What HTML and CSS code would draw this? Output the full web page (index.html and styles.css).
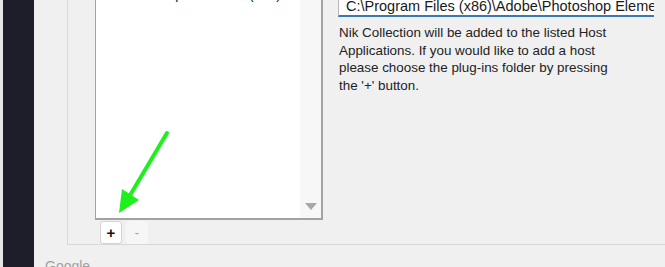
FILE: index.html
```html
<!DOCTYPE html>
<html>
<head>
<meta charset="utf-8">
<link rel="stylesheet" href="styles.css">
</head>
<body>
<div class="app">
  <div class="edge"></div>
  <div class="sidebar"></div>
  <div class="main">
    <div class="group">
      <div class="listcol">
        <div class="listbox">
          <div class="items">
            <div class="item">Photoshop Elements (x64)</div>
          </div>
          <div class="scrollbar">
            <div class="scroll-down"></div>
          </div>
        </div>
        <div class="buttons">
          <button class="btn add">+</button>
          <button class="btn remove">-</button>
        </div>
      </div>
      <div class="rightcol">
        <div class="pathbox">C:\Program Files (x86)\Adobe\Photoshop Elements 2020</div>
        <p class="desc">Nik Collection will be added to the listed Host<br>Applications. If you would like to add a host<br>please choose the plug-ins folder by pressing<br>the '+' button.</p>
      </div>
    </div>
    <div class="footer">Google</div>
  </div>
  <svg class="arrow" width="665" height="267" viewBox="0 0 665 267">
    <line x1="167" y1="133" x2="129" y2="197" stroke="#1ef01e" stroke-width="4" stroke-linecap="round"/>
    <polygon points="119,213 122,189 139,200" fill="#1ef01e"/>
  </svg>
</div>
</body>
</html>
```

FILE: styles.css
```css
html, body {
  margin: 0;
  padding: 0;
}
body {
  width: 665px;
  height: 267px;
  overflow: hidden;
  font-family: "Liberation Sans", Arial, sans-serif;
  background: #f0f0f0;
}
.app {
  position: relative;
  display: flex;
  width: 665px;
  height: 267px;
}
.edge {
  width: 3px;
  background: #e6e6e8;
}
.sidebar {
  width: 31px;
  background: #1e1e2b;
}
.main {
  flex: 1;
  display: flex;
  flex-direction: column;
  background: #f0f0f0;
}
.group {
  margin-left: 33px;
  border-left: 1px solid #d8d8d8;
  border-bottom: 1px solid #d8d8d8;
  display: flex;
  padding-left: 27px;
  box-sizing: border-box;
  height: 247px;
}
.listcol {
  width: 228px;
  display: flex;
  flex-direction: column;
}
.listbox {
  height: 220px;
  box-sizing: border-box;
  background: #fff;
  border: 1px solid #a2a2a2;
  border-top: none;
  border-right-width: 2px;
  border-bottom-width: 2px;
  display: flex;
}
.items {
  flex: 1;
  overflow: hidden;
}
.item {
  font-size: 14px;
  color: #222;
  margin-top: -14px;
  padding-left: 20px;
  height: 18px;
}
.scrollbar {
  width: 21px;
  background: #f7f7f7;
  display: flex;
  flex-direction: column;
  justify-content: flex-end;
  align-items: center;
}
.scroll-down {
  width: 0;
  height: 0;
  border-left: 6px solid transparent;
  border-right: 6px solid transparent;
  border-top: 7px solid #a8a8a8;
  margin-bottom: 8px;
}
.buttons {
  display: flex;
  gap: 4px;
  padding-left: 5px;
  margin-top: 1px;
}
.btn {
  width: 22px;
  height: 23px;
  padding: 0;
  font-family: "Liberation Sans", Arial, sans-serif;
  font-size: 15px;
  line-height: 20px;
  border-radius: 3px;
}
.add {
  background: #fff;
  border: 1px solid #d4d4d4;
  color: #111;
  font-weight: bold;
}
.remove {
  background: #f6f6f6;
  border: 1px solid #f6f6f6;
  color: #a0a0a0;
  font-size: 13px;
}
.rightcol {
  margin-left: 15px;
  width: 318px;
}
.pathbox {
  margin-top: -5px;
  height: 22px;
  box-sizing: border-box;
  background: #fff;
  border-left: 1px solid #b8b8b8;
  border-bottom: 2px solid #3a78b0;
  padding-left: 7px;
  font-size: 14.5px;
  line-height: 22px;
  color: #1a1a1a;
  white-space: nowrap;
  overflow: hidden;
  width: 316px;
}
.desc {
  margin: 7px 0 0 1px;
  font-size: 13.4px;
  line-height: 17.7px;
  color: #222;
  white-space: nowrap;
}
.footer {
  padding-left: 11px;
  padding-top: 13px;
  font-size: 14px;
  color: #a0a0a0;
}
.arrow {
  position: absolute;
  left: 0;
  top: 0;
  pointer-events: none;
}
```
